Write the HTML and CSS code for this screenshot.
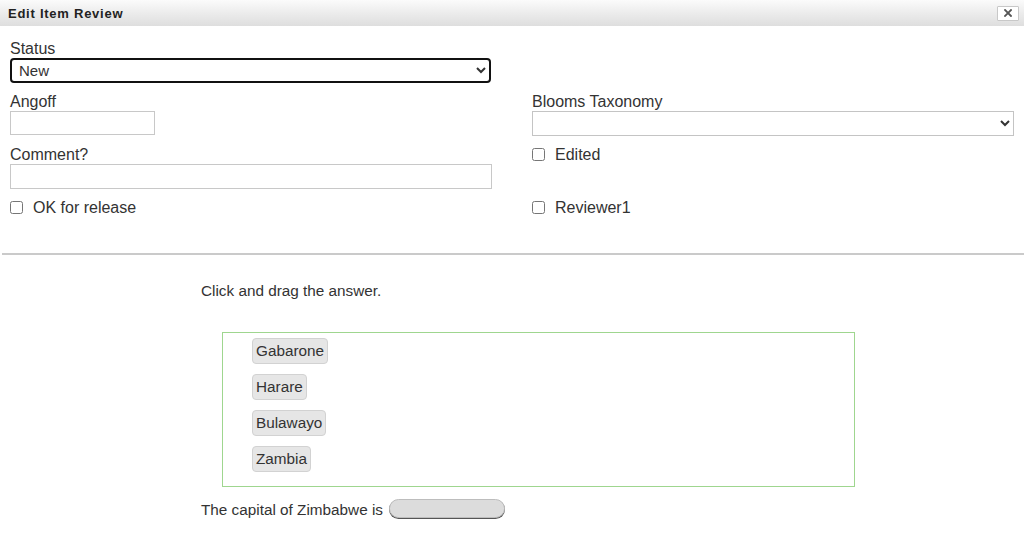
FILE: index.html
```html
<!DOCTYPE html>
<html lang="en">
<head>
<meta charset="utf-8">
<title>Edit Item Review</title>
<link rel="stylesheet" href="styles.css">
</head>
<body>
<div class="dialog">
  <div class="titlebar">
    <span class="title">Edit Item Review</span>
    <button class="close" type="button" aria-label="Close">
      <svg width="8" height="8" viewBox="0 0 8 8"><path d="M1 1 L7 7 M7 1 L1 7" stroke="#555" stroke-width="1.8" stroke-linecap="square"/></svg>
    </button>
  </div>

  <form class="form">
    <div class="field">
      <label class="lbl">Status</label>
      <select class="sel sel-focus"><option>New</option></select>
    </div>
    <div></div>

    <div class="field">
      <label class="lbl">Angoff</label>
      <input class="txt txt-short" type="text">
    </div>
    <div class="field">
      <label class="lbl">Blooms Taxonomy</label>
      <select class="sel"><option></option></select>
    </div>

    <div class="field">
      <label class="lbl">Comment?</label>
      <input class="txt" type="text">
    </div>
    <label class="check"><input type="checkbox"><span>Edited</span></label>

    <label class="check"><input type="checkbox"><span>OK for release</span></label>
    <label class="check"><input type="checkbox"><span>Reviewer1</span></label>
  </form>

  <div class="question">
    <p class="prompt">Click and drag the answer.</p>
    <div class="answers">
      <span class="chip">Gabarone</span>
      <span class="chip">Harare</span>
      <span class="chip">Bulawayo</span>
      <span class="chip">Zambia</span>
    </div>
    <p class="sentence">The capital of Zimbabwe is <span class="drop"></span></p>
  </div>
</div>
</body>
</html>
```

FILE: styles.css
```css
* { box-sizing: border-box; }

html, body {
  margin: 0;
  padding: 0;
  background: #fff;
}

body {
  font-family: "Liberation Sans", Arial, sans-serif;
  color: #333;
}

.titlebar {
  height: 26px;
  display: flex;
  align-items: center;
  justify-content: space-between;
  padding: 0 5px 0 8px;
  background: linear-gradient(to bottom, #fbfbfb 0%, #ececec 50%, #dedede 100%);
}

.title {
  font-weight: bold;
  font-size: 13px;
  letter-spacing: 0.75px;
  color: #222;
}

.close {
  width: 22px;
  height: 15px;
  padding: 0;
  margin: 0;
  background: #fff;
  border: 1px solid #c8c8c8;
  border-radius: 1px;
  display: flex;
  align-items: center;
  justify-content: center;
}

.form {
  display: grid;
  grid-template-columns: 1fr 1fr;
  column-gap: 40px;
  row-gap: 9px;
  padding: 13px 10px 36px 10px;
  margin: 0;
}

.field {
  display: flex;
  flex-direction: column;
  align-items: flex-start;
}

.lbl {
  font-size: 16px;
  line-height: 19px;
  color: #333;
}

.sel {
  width: 100%;
  height: 25px;
  font-family: "Liberation Sans", Arial, sans-serif;
  font-size: 15px;
  color: #333;
  background: #fff;
  border: 1px solid #c4c4c4;
  border-radius: 0;
  padding: 0 3px;
  margin: 0;
}

.sel-focus {
  border: 2px solid #111;
  border-radius: 4px;
  width: calc(100% - 1px);
}

.txt {
  width: 100%;
  height: 25px;
  border: 1px solid #c8c8c8;
  background: #fff;
  margin: 0;
  padding: 0 4px;
  font-size: 15px;
}

.txt-short {
  width: 145px;
  height: 24px;
}

.check {
  display: flex;
  align-items: center;
  height: 19px;
  font-size: 16px;
  color: #333;
}

.check input {
  width: 13px;
  height: 13px;
  margin: 0 10px 0 0;
}

.question {
  border-top: 2px solid #cacaca;
  margin-left: 2px;
  padding: 27px 0 20px 199px;
  font-size: 15.3px;
  color: #333;
}

.prompt {
  margin: 0;
  line-height: 18px;
}

.answers {
  width: 633px;
  margin: 32px 0 0 21px;
  border: 1px solid #9fd68f;
  padding: 5px 0 14px 29px;
  display: flex;
  flex-direction: column;
  align-items: flex-start;
  gap: 10px;
}

.chip {
  height: 26px;
  line-height: 24px;
  padding: 0 3px;
  background: #e6e6e6;
  border: 1px solid #d2d2d2;
  border-radius: 4px;
  color: #333;
}

.sentence {
  margin: 12px 0 0 0;
  line-height: 22px;
}

.drop {
  display: inline-block;
  width: 116px;
  height: 19px;
  margin-left: 2px;
  vertical-align: -3px;
  background: #dcdcdc;
  border: 1px solid #bdbdbd;
  border-radius: 10px;
  box-shadow: 0 1px 0 #555;
}
```
